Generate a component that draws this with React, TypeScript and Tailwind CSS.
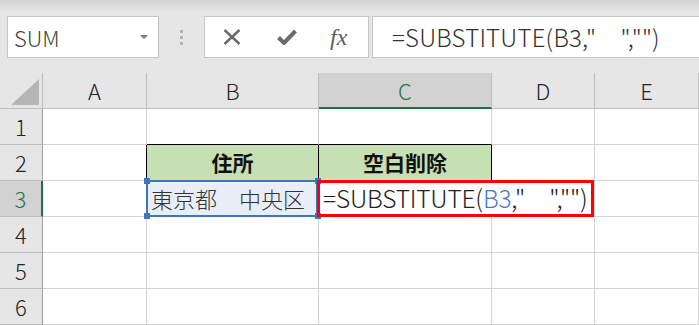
import React from 'react';

const font = 'font-[Noto_Sans_CJK_JP,sans-serif] font-light';

// column widths including the right grid line
const cols = [
  { key: 'A', w: 'w-[104px]' },
  { key: 'B', w: 'w-[172px]' },
  { key: 'C', w: 'w-[173px]' },
  { key: 'D', w: 'w-[103px]' },
  { key: 'E', w: 'flex-1' },
];

const Toolbar = () => (
  <div className="h-[73px] bg-[#e6e6e6]">
    <div className="h-[12px] bg-linear-to-b from-[#d3d3d3] to-[#e6e6e6]" />
    <div className="flex items-center pt-[4px]">
      {/* name box */}
      <div className="ml-[7px] flex h-[42px] w-[152px] items-center justify-between border border-[#c6c6c6] bg-white pl-[6px] pr-[10px]">
        <span className={`${font} text-[22px] text-[#444]`}>SUM</span>
        <svg width="8" height="5" viewBox="0 0 8 5">
          <path d="M0 0 L8 0 L4 4 Z" fill="#7a7a7a" />
        </svg>
      </div>
      {/* grip dots */}
      <div className="flex w-[45px] flex-col items-center gap-[3px]">
        <span className="h-[3px] w-[3px] bg-[#b3b3b3]" />
        <span className="h-[3px] w-[3px] bg-[#b3b3b3]" />
        <span className="h-[3px] w-[3px] bg-[#b3b3b3]" />
      </div>
      {/* cancel / enter / fx */}
      <div className="flex h-[42px] w-[165px] items-center border border-[#c6c6c6] bg-white">
        <svg className="ml-[18px]" width="18" height="16" viewBox="0 0 18 16">
          <path d="M1.5 1 L16.5 15 M16.5 1 L1.5 15" stroke="#6b6b6b" strokeWidth="2.4" />
        </svg>
        <svg className="ml-[36px]" width="20" height="16" viewBox="0 0 20 16">
          <path d="M1.5 8.5 L7 14 L18.5 2" stroke="#6b6b6b" strokeWidth="4" fill="none" />
        </svg>
        <span className="ml-[33px] font-[Liberation_Serif,serif] text-[24px] italic text-[#5f5f5f]">
          fx
        </span>
      </div>
      {/* formula input */}
      <div className="ml-[3px] flex h-[42px] flex-1 items-center border border-r-0 border-[#c6c6c6] bg-white pl-[19px]">
        <span className={`${font} whitespace-pre text-[24px] tracking-[0.2px] text-[#333]`}>
          =SUBSTITUTE(B3,"　","")
        </span>
      </div>
    </div>
  </div>
);

const HeaderRow = () => (
  <div className="flex h-[36px] bg-[#e6e6e6]">
    <div className="flex w-[43px] items-end justify-end border-r border-b border-[#bdbdbd] pr-[3px] pb-[3px]">
      <svg width="28" height="26" viewBox="0 0 28 26">
        <path d="M28 0 L28 26 L0 26 Z" fill="#b5b5b5" />
      </svg>
    </div>
    {cols.map((c) => {
      const sel = c.key === 'C';
      return (
        <div
          key={c.key}
          className={`${c.w} flex items-center justify-center border-r ${
            sel
              ? 'border-b-2 border-r-[#bdbdbd] border-b-[#217346] bg-[#d2d2d2] text-[#217346]'
              : 'border-b border-[#bdbdbd] text-[#222]'
          } ${font} text-[22px]`}
        >
          {c.key}
        </div>
      );
    })}
  </div>
);

const RowHeader = ({ n }: { n: number }) => {
  const sel = n === 3;
  return (
    <div
      className={`flex w-[43px] items-center justify-center border-b border-b-[#bdbdbd] ${
        sel
          ? 'border-r-2 border-r-[#217346] bg-[#d2d2d2] text-[#217346]'
          : 'border-r border-r-[#9e9e9e] bg-[#e6e6e6] text-[#222]'
      } ${font} text-[22px]`}
    >
      {n}
    </div>
  );
};

const Row = ({ n }: { n: number }) => {
  const grid = 'border-r border-b border-[#d4d4d4]';
  return (
    <div className="flex h-[36px]">
      <RowHeader n={n} />
      {/* A */}
      <div
        className={`w-[104px] border-r border-b ${
          n === 2 ? 'border-r-black border-b-[#d4d4d4]' : 'border-[#d4d4d4]'
        }`}
      />
      {/* B */}
      {n === 2 ? (
        <div className="flex w-[172px] items-center justify-center border-r border-b border-black bg-[#c6e0b4] font-[Noto_Sans_CJK_JP,sans-serif] text-[21px] font-bold text-[#111]">
          住所
        </div>
      ) : n === 3 ? (
        <div className={`relative flex w-[172px] items-center border-r border-b border-[#d4d4d4] bg-[#e8eef8] pl-[4px] ${font} text-[22px] text-[#333]`}>
          <span className="whitespace-pre">東京都　中央区</span>
          <div className="absolute -left-[1px] -top-[1px] h-[37px] w-[172px] border-2 border-[#3d74c6]" />
          <span className="absolute -left-[3px] -top-[3px] h-[6px] w-[6px] bg-[#3d74c6]" />
          <span className="absolute -right-[3px] -top-[3px] h-[6px] w-[6px] bg-[#3d74c6]" />
          <span className="absolute -left-[3px] -bottom-[3px] h-[6px] w-[6px] bg-[#3d74c6]" />
          <span className="absolute -right-[3px] -bottom-[3px] h-[6px] w-[6px] bg-[#3d74c6]" />
        </div>
      ) : (
        <div className={`w-[172px] border-r border-b ${n === 1 ? 'border-r-[#d4d4d4] border-b-black' : 'border-[#d4d4d4]'}`} />
      )}
      {/* C */}
      {n === 2 ? (
        <div className="flex w-[173px] items-center justify-center border-r border-b border-black bg-[#c6e0b4] font-[Noto_Sans_CJK_JP,sans-serif] text-[21px] font-bold text-[#111]">
          空白削除
        </div>
      ) : n === 3 ? (
        <div className={`relative z-10 flex w-[173px] items-center border-b border-[#d4d4d4] pl-[4px] ${font} text-[24.5px] text-[#222]`}>
          <span className="whitespace-pre tracking-[-0.2px]">
            =SUBSTITUTE(<span className="text-[#4a78c8]">B3</span>,"　","")
          </span>
          <div className="absolute -left-[2px] -top-[1px] h-[37px] w-[277px] border-[3px] border-[#ff0000]" />
        </div>
      ) : (
        <div className={`w-[173px] border-r border-b ${n === 1 ? 'border-r-[#d4d4d4] border-b-black' : 'border-[#d4d4d4]'}`} />
      )}
      {/* D */}
      <div className={`w-[103px] ${grid}`} />
      {/* E */}
      <div className={`flex-1 ${grid}`} />
    </div>
  );
};

export default function App() {
  return (
    <div className="h-[325px] w-[699px] overflow-hidden bg-white">
      <Toolbar />
      <HeaderRow />
      {[1, 2, 3, 4, 5, 6].map((n) => (
        <Row key={n} n={n} />
      ))}
    </div>
  );
}
